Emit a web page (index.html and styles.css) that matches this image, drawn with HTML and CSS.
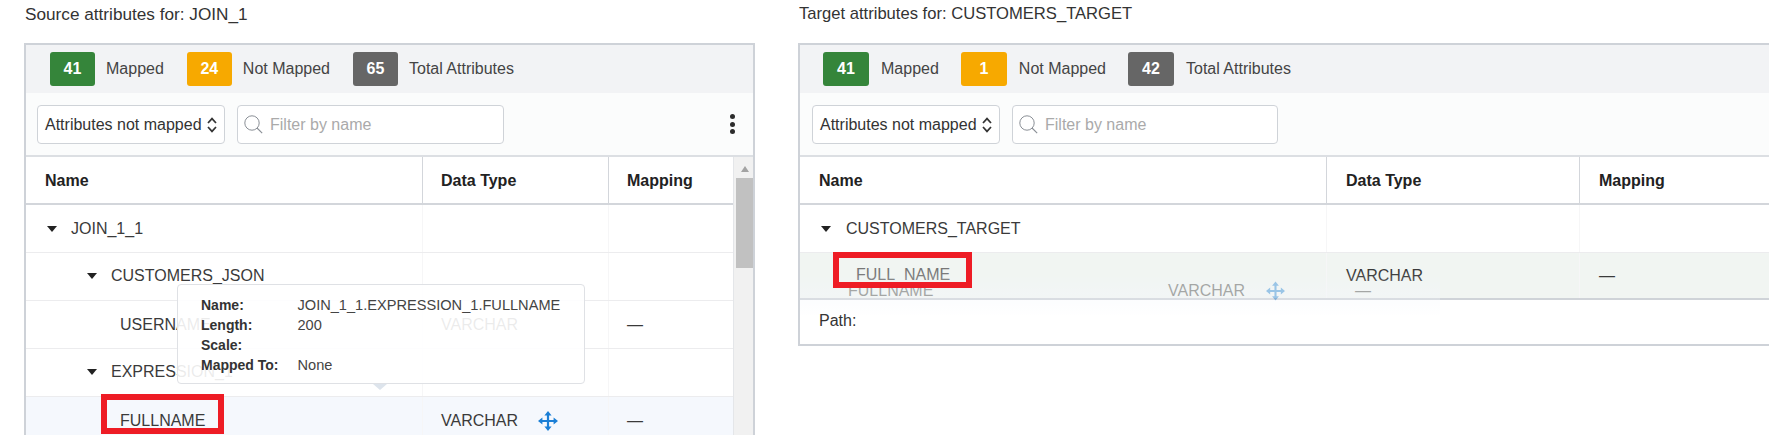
FILE: index.html
```html
<!DOCTYPE html>
<html lang="en">
<head>
<meta charset="utf-8">
<title>Attribute mapping</title>
<link rel="stylesheet" href="styles.css">
</head>
<body>
<svg class="defs" width="0" height="0" aria-hidden="true">
  <symbol id="move" viewBox="0 0 20 20"><path d="M10 0l3.6 4.4h-2.5v4.5h4.5V6.4L20 10l-4.4 3.6v-2.5h-4.5v4.5h2.5L10 20l-3.6-4.4h2.5v-4.5H4.4v2.5L0 10l4.4-3.6v2.5h4.5V4.4H6.4z" fill="currentColor"/></symbol>
  <symbol id="updown" viewBox="0 0 10 16"><path d="M1 6l4-4.4L9 6M1 10l4 4.4L9 10" fill="none" stroke="currentColor" stroke-width="1.7"/></symbol>
  <symbol id="search" viewBox="0 0 19 19"><circle cx="8" cy="8" r="7.2" fill="none" stroke="currentColor" stroke-width="1"/><path d="M13 13l5.2 5.2" fill="none" stroke="currentColor" stroke-width="1.1"/></symbol>
</svg>
<main class="page">
  <section class="column source">
    <h2 class="title">Source attributes for: JOIN_1</h2>
    <div class="panel">
      <div class="stats">
        <span class="badge green">41</span><span class="stat">Mapped</span>
        <span class="badge amber">24</span><span class="stat">Not Mapped</span>
        <span class="badge grey">65</span><span class="stat">Total Attributes</span>
      </div>
      <div class="toolbar">
        <div class="select">Attributes not mapped<svg class="updown"><use href="#updown"/></svg></div>
        <div class="filter"><svg class="search"><use href="#search"/></svg><span>Filter by name</span></div>
        <div class="kebab"><i></i><i></i><i></i></div>
      </div>
      <div class="grid-wrap">
        <div class="grid">
          <div class="row head">
            <div class="cell">Name</div><div class="cell">Data Type</div><div class="cell">Mapping</div>
          </div>
          <div class="row">
            <div class="cell lvl1"><b class="caret"></b>JOIN_1_1</div><div class="cell"></div><div class="cell"></div>
          </div>
          <div class="row">
            <div class="cell lvl2"><b class="caret"></b>CUSTOMERS_JSON</div><div class="cell"></div><div class="cell"></div>
          </div>
          <div class="row">
            <div class="cell lvl3">USERNAME</div><div class="cell">VARCHAR</div><div class="cell">—</div>
          </div>
          <div class="row">
            <div class="cell lvl2"><b class="caret"></b>EXPRESSION_1</div><div class="cell"></div><div class="cell"></div>
          </div>
          <div class="row active">
            <div class="cell lvl3">FULLNAME</div>
            <div class="cell">VARCHAR<svg class="move"><use href="#move"/></svg></div>
            <div class="cell">—</div>
          </div>
        </div>
        <div class="scrollbar"><span class="arrow"></span><span class="thumb"></span></div>
      </div>
      <div class="tooltip">
        <dl class="tip-list">
          <dt>Name:</dt><dd>JOIN_1_1.EXPRESSION_1.FULLNAME</dd>
          <dt>Length:</dt><dd>200</dd>
          <dt>Scale:</dt><dd></dd>
          <dt>Mapped To:</dt><dd>None</dd>
        </dl>
      </div>
      <div class="redbox red-source"></div>
    </div>
  </section>

  <section class="column target">
    <h2 class="title">Target attributes for: CUSTOMERS_TARGET</h2>
    <div class="panel">
      <div class="stats">
        <span class="badge green">41</span><span class="stat">Mapped</span>
        <span class="badge amber">1</span><span class="stat">Not Mapped</span>
        <span class="badge grey">42</span><span class="stat">Total Attributes</span>
      </div>
      <div class="toolbar">
        <div class="select">Attributes not mapped<svg class="updown"><use href="#updown"/></svg></div>
        <div class="filter"><svg class="search"><use href="#search"/></svg><span>Filter by name</span></div>
      </div>
      <div class="grid">
        <div class="row head">
          <div class="cell">Name</div><div class="cell">Data Type</div><div class="cell">Mapping</div>
        </div>
        <div class="row">
          <div class="cell lvl1"><b class="caret"></b>CUSTOMERS_TARGET</div><div class="cell"></div><div class="cell"></div>
        </div>
        <div class="row matched">
          <div class="cell lvl3b faded">FULL_NAME</div><div class="cell">VARCHAR</div><div class="cell">—</div>
        </div>
      </div>
      <div class="path">Path:</div>
      <div class="ghost">
        <span class="g-name">FULLNAME</span>
        <span class="g-type">VARCHAR</span>
        <svg class="g-move"><use href="#move"/></svg>
        <span class="g-dash">—</span>
      </div>
      <div class="redbox red-target"></div>
    </div>
  </section>
</main>
</body>
</html>
```

FILE: styles.css
```css
* { box-sizing: border-box; }
html, body { margin: 0; height: 100%; }
body {
  background: #fff;
  font-family: "Liberation Sans", Arial, sans-serif;
  font-size: 16px;
  color: #3a3a3a;
  overflow: hidden;
}
.defs { position: absolute; }
.page { display: flex; height: 435px; overflow: hidden; padding-left: 24px; gap: 43px; }
.column { flex: none; display: flex; flex-direction: column; }
.source { width: 731px; }
.target { width: 1100px; }
.title {
  margin: 0 0 20px 1px;
  height: 23px;
  padding-top: 4px;
  font-size: 17.2px;
  font-weight: 400;
  line-height: 20px;
  color: #333;
}
.target .title { font-size: 16.6px; }
.panel { position: relative; flex: none; border: 2px solid #ced2d8; }
.source .panel { height: 392px; border-bottom: 0; }
.target .panel { height: 303px; }

.stats {
  display: flex;
  align-items: center;
  height: 48px;
  padding-left: 24px;
  background: #f2f3f5;
}
.target .stats { padding-left: 23px; }
.badge {
  flex: none;
  width: 45px;
  height: 34px;
  border-radius: 3px;
  display: flex;
  align-items: center;
  justify-content: center;
  color: #fff;
  font-weight: 700;
  font-size: 16px;
}
.target .badge { width: 46px; }
.green { background: #35853a; }
.amber { background: #f7a900; }
.grey { background: #666; }
.stat { margin-left: 12px; margin-right: 22px; color: #444; }
.source .stat { margin-left: 11px; margin-right: 23px; }

.toolbar {
  display: flex;
  align-items: center;
  height: 64px;
  padding-left: 11px;
  gap: 12px;
  background: #fbfcfc;
  border-bottom: 2px solid #dcdfe3;
}
.target .toolbar { padding-left: 12px; }
.select, .filter {
  display: flex;
  align-items: center;
  height: 39px;
  padding-top: 1px;
  background: #fff;
  border: 1px solid #cfd3d8;
  border-radius: 4px;
}
.select { width: 188px; padding-left: 7px; padding-right: 7px; color: #333; white-space: nowrap; }
.updown { flex: none; width: 10px; height: 16px; margin-left: auto; color: #333; }
.filter { width: 267px; padding-left: 6px; color: #aaa; }
.target .filter { width: 266px; }
.search { flex: none; width: 19px; height: 19px; margin-right: 7px; color: #8a8f96; }
.kebab {
  margin-left: auto;
  margin-right: 18px;
  display: flex;
  flex-direction: column;
  gap: 2.5px;
}
.kebab i { display: block; width: 5px; height: 5px; border-radius: 50%; background: #2c2c2c; }

.grid-wrap { display: flex; }
.grid { flex: 1; min-width: 0; }
.row { display: grid; height: 48px; border-bottom: 1px solid #ececee; }
.source .row { grid-template-columns: 397px 186px 124px; }
.target .row { grid-template-columns: 527px 253px 1fr; }
.cell {
  display: flex;
  align-items: center;
  padding-left: 19px;
  border-right: 1px solid #f6f6f7;
  white-space: nowrap;
}
.source .cell + .cell { padding-left: 18px; }
.cell:last-child { border-right: 0; }
.row.head { border-bottom: 2px solid #d3d6db; font-weight: 700; color: #222; }
.row.head .cell { border-right: 1px solid #d3d6db; padding-top: 1px; }
.row.head .cell:last-child { border-right: 0; }
.row.active { background: #f5f8fd; }
.row.matched { height: 47px; background: #f1f5f2; border-bottom: 2px solid #cfd3d8; }
.lvl1 { padding-left: 21px; }
.lvl2 { padding-left: 61px; padding-bottom: 2px; }
.lvl3 { padding-left: 94px; }
.lvl3b { padding-left: 56px; padding-bottom: 2px; }
.faded { color: #777; }
.caret {
  display: block;
  width: 0;
  height: 0;
  margin-right: 14px;
  border-left: 5.5px solid transparent;
  border-right: 5.5px solid transparent;
  border-top: 6px solid #222;
}
.target .caret { margin-right: 15px; }
.move { width: 20px; height: 20px; margin-left: 20px; color: #1b7fd6; }

.scrollbar {
  flex: none;
  width: 20px;
  background: #f1f1f1;
  border-left: 1px solid #e4e6e9;
  padding: 9px 0 0 2px;
  display: flex;
  flex-direction: column;
  align-items: center;
}
.arrow {
  width: 0;
  height: 0;
  border-left: 4px solid transparent;
  border-right: 4px solid transparent;
  border-bottom: 6px solid #a3a3a3;
}
.thumb { width: 17px; height: 90px; margin-top: 6px; background: #c1c1c1; }

.path { height: 44px; padding: 11px 0 0 19px; line-height: 20px; color: #333; }

.tooltip {
  position: absolute;
  left: 151px;
  top: 239px;
  width: 408px;
  height: 100px;
  padding: 10px 0 0 23px;
  background: rgba(255, 255, 255, .9);
  border: 1px solid #dfe1e5;
  border-radius: 4px;
}
.tooltip::after {
  content: "";
  position: absolute;
  left: 195px;
  bottom: -7px;
  border-left: 7px solid transparent;
  border-right: 7px solid transparent;
  border-top: 6px solid #dde4ec;
}
.tip-list {
  margin: 0;
  display: grid;
  grid-template-columns: 96.5px 1fr;
  grid-auto-rows: 20px;
  line-height: 20px;
  font-size: 14px;
}
.tip-list dt { font-weight: 700; color: #333; }
.tip-list dd { margin: 0; color: #444; font-size: 14.6px; }

.redbox { position: absolute; border: 6px solid #ee1c25; pointer-events: none; }
.red-source { left: 75px; top: 349px; width: 123px; height: 40px; }
.red-target { left: 33px; top: 207px; width: 139px; height: 36px; }

.ghost {
  position: absolute;
  left: 0;
  top: 227px;
  width: 640px;
  height: 44px;
  opacity: .4;
  color: #333;
  background: linear-gradient(to bottom, rgba(245, 248, 253, 0), rgba(245, 248, 253, .9) 50%, rgba(245, 248, 253, 0));
  line-height: 20px;
}
.ghost span, .ghost svg { position: absolute; top: 9px; }
.g-name { left: 48px; }
.g-type { left: 368px; }
.g-move { left: 466px; width: 19px; height: 20px; color: #1b7fd6; }
.g-dash { left: 555px; }
```
